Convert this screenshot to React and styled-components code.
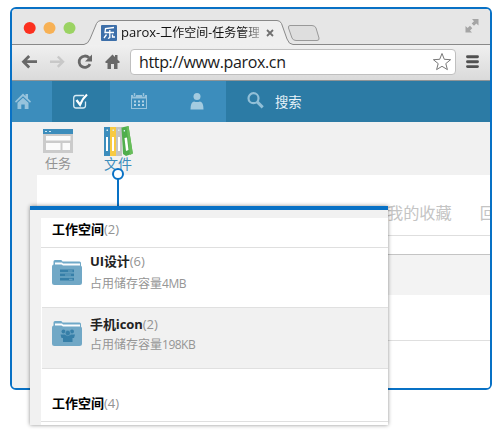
import React from 'react';
import styled, { createGlobalStyle } from 'styled-components';

const Global = createGlobalStyle`
  * { box-sizing: border-box; }
  body { margin: 0; background: #fff; overflow: hidden; }
  #root { font-family: "Open Sans", "Noto Sans CJK SC", sans-serif; }
  svg { display: block; flex: none; }
`;

const Stage = styled.div`
  position: relative;
  width: 502px;
  height: 446px;
  padding: 7px 10px;
  overflow: hidden;
`;

const Browser = styled.div`
  width: 482px;
  height: 383px;
  border: 2px solid #0871c5;
  border-radius: 6px;
  overflow: hidden;
  display: flex;
  flex-direction: column;
  background: #fff;
`;

const TabStrip = styled.div`
  height: 36px;
  flex: none;
  display: grid;
  background: #e6e6e6;
  > * { grid-area: 1 / 1; }
`;

const TabContent = styled.div`
  display: flex;
  align-items: center;
  height: 25px;
  margin: 11px 0 0 89px;
  z-index: 1;
`;

const TabTitle = styled.div`
  width: 138px;
  margin: 0 5px 0 4px;
  font-size: 12px;
  line-height: 20px;
  white-space: nowrap;
  color: #111;
  mask-image: linear-gradient(90deg, #000 88%, rgba(0, 0, 0, 0.35));
`;

const Latin = styled.span`
  font-size: 13px;
`;

const Toolbar = styled.div`
  height: 36px;
  flex: none;
  display: flex;
  align-items: flex-start;
  background: linear-gradient(#f0f0f0, #dadada);
  border-bottom: 1px solid #8f9496;
`;

const Address = styled.div`
  display: flex;
  align-items: center;
  justify-content: space-between;
  width: 326px;
  height: 26px;
  margin: 4px 9px 0 0;
  padding: 0 3px 0 8px;
  background: #fff;
  border: 1px solid #bfbfbf;
  border-radius: 4px;
  font-size: 16px;
  letter-spacing: -0.35px;
  line-height: 24px;
  color: #1a1a1a;
`;

const Nav = styled.div`
  height: 41px;
  flex: none;
  display: flex;
  border-bottom: 1px solid #2874a0;
`;

const NavItem = styled.div`
  width: ${(p) => p.$width}px;
  height: 41px;
  display: flex;
  padding: 10px 0 0 ${(p) => p.$inset}px;
  background: ${(p) => (p.$dark ? '#2c7ba5' : '#3c8dbc')};
`;

const SearchLabel = styled.span`
  margin-left: 10px;
  font-size: 13.3px;
  line-height: 22px;
  color: #e8f3f9;
`;

const SubNav = styled.div`
  height: 53px;
  flex: none;
  display: flex;
  padding: 4px 0 0 16px;
  background: #f1f1f1;
`;

const Shortcut = styled.div`
  width: 60px;
  display: flex;
  flex-direction: column;
  align-items: center;
  font-size: ${(p) => p.$size}px;
  line-height: 16px;
  color: ${(p) => p.$color};
  span { margin-top: ${(p) => p.$gap}px; }
`;

const Body = styled.div`
  flex: 1;
  display: flex;
  background: #f1f1f1;
`;

const Sheet = styled.div`
  width: 453px;
  margin-left: 25px;
  background: #fff;
`;

const Links = styled.div`
  height: 61px;
  display: flex;
  gap: 28px;
  padding: 26px 0 0 350px;
  border-bottom: 1px solid #dedede;
  font-size: 16.2px;
  line-height: 24px;
  color: #c4c4c4;
  white-space: nowrap;
  overflow: hidden;
`;

const Band = styled.div`
  height: ${(p) => p.$height}px;
  background: ${(p) => p.$bg || '#fff'};
  border-bottom: ${(p) => (p.$line ? `1px solid ${p.$line}` : 'none')};
`;

const Connector = styled.svg`
  position: absolute;
  left: 111px;
  top: 167px;
`;

const Popover = styled.div`
  position: absolute;
  left: 30px;
  top: 206px;
  width: 358px;
  height: 219px;
  padding: 8px 0 0 11px;
  border-top: 4px solid #0871c5;
  background: #f1f1f1;
  box-shadow: 0 0 4px rgba(0, 0, 0, 0.45);
`;

const List = styled.div`
  height: 207px;
  background: #fff;
`;

const GroupTitle = styled.div`
  height: ${(p) => p.$height}px;
  padding: ${(p) => p.$top}px 0 0 11px;
  border-bottom: 1px solid #dfdfdf;
  font-size: 13px;
  line-height: 20px;
  color: #000;
`;

const Count = styled.span`
  font-size: 13px;
  color: #939393;
`;

const Item = styled.div`
  height: ${(p) => p.$height}px;
  display: flex;
  gap: 8px;
  margin-left: 1px;
  padding: ${(p) => p.$top}px 0 0 10px;
  border-bottom: 1px solid #e0e0e0;
  background: ${(p) => (p.$active ? '#f1f1f1' : '#fff')};
  > svg { margin-top: ${(p) => p.$drop}px; }
`;

const Name = styled.div`
  font-size: 13px;
  line-height: 20px;
  color: #222;
  b { letter-spacing: -0.1px; }
`;

const Meta = styled.div`
  margin-top: ${(p) => p.$gap}px;
  font-size: 12px;
  line-height: 20px;
  color: #959595;
  span { letter-spacing: -0.5px; }
`;

const TabShape = () => (
  <svg width="478" height="36" viewBox="12 9 478 36">
    <path d="M12 44.5H84Q88 44 90 39L96.500 23.500Q98 20.500 101 20.500H277Q280 20.500 281.500 23.500L287 39Q289 44.500 293 44.500H490V46H12Z" fill="#efefef" />
    <path d="M12 44.500H84Q88 44 90 39L96.500 23.500Q98 20.500 101 20.500H277Q280 20.500 281.500 23.500L287 39Q289 44.500 293 44.500H490" fill="none" stroke="#898989" />
    <path d="M290 25.500H312Q315 25.500 316 28L319 38Q319.500 40.500 317 40.500H296Q293 40.500 292 38L288.500 28Q288 25.500 290 25.500Z" fill="#dedede" stroke="#999" />
    <circle cx="29.700" cy="28" r="6" fill="#fc301f" />
    <circle cx="49.500" cy="28" r="6" fill="#f7b155" />
    <circle cx="69.500" cy="28" r="6" fill="#9bd363" />
    <g fill="#a5a5a5">
      <path d="M472 19H478.500V25.500L476.300 23.500L474 25.800L471.700 23.500L474 21.200Z" />
      <path d="M465.500 26V32.500H472L470 30.500L472.300 28.200L470 25.800L467.600 28Z" />
    </g>
  </svg>
);

const Favicon = () => (
  <svg width="16" height="16" viewBox="0 0 16 16">
    <rect width="16" height="16" rx="1" fill="#3d6fa9" />
    <path d="M13 2.500L4.500 3.500L4 7.500H13M8.800 5V12.500L7 13.500M5.500 9.500L3 13M11.500 9.500V12H14" fill="none" stroke="#fff" strokeWidth="1.300" />
  </svg>
);

const CloseMark = () => (
  <svg width="10" height="10" viewBox="0 0 10 10">
    <path d="M3 2L9 8M9 2L3 8" stroke="#707070" strokeWidth="1.800" />
  </svg>
);

const Controls = () => (
  <svg width="118" height="35" viewBox="12 45 118 35">
    <g fill="none" strokeWidth="2.800">
      <path d="M37 61.700H24M29.200 56L23.500 61.700L29.200 67.400" stroke="#686868" />
      <path d="M50 61.700H62M57.800 56.500L63 61.700L57.800 66.900" stroke="#c8c8c8" strokeWidth="2.400" />
      <path d="M89 57.800A5.700 5.700 0 1 0 90 64.200" stroke="#686868" />
    </g>
    <path d="M92 54.500V61.500H85Z" fill="#686868" />
    <path d="M105 62L112.500 54.500L115 57V55H117.500V59.500L120 62L119 63H117.500V69H114V64H111V69H107.500V63H106Z" fill="#686868" />
  </svg>
);

const Star = () => (
  <svg width="20" height="20" viewBox="0 0 20 20">
    <path d="M10 1.500L12.300 7.300L18.600 7.700L13.800 11.600L15.400 17.600L10 14.300L4.600 17.600L6.200 11.600L1.400 7.700L7.700 7.300Z" fill="#fff" stroke="#777" strokeLinejoin="round" />
  </svg>
);

const Menu = () => (
  <svg width="15" height="35" viewBox="0 0 15 35">
    <path d="M2.500 11.800H12.500M2.500 16.700H12.500M2.500 21.600H12.500" stroke="#505050" strokeWidth="2.900" strokeLinecap="round" />
  </svg>
);

const HomeIcon = () => (
  <svg width="18" height="20" viewBox="0 0 18 20">
    <g fill="#97c3dc">
      <path d="M1 10.500L9 2.500L11.500 5V3H14V7.500L17 10.500L16 11.700L9 5.200L2 11.700Z" />
      <path d="M3.500 11.700L9 6.700L14.500 11.700V18H10.700V13.500H7.300V18H3.500Z" />
    </g>
  </svg>
);

const CheckIcon = () => (
  <svg width="17" height="20" viewBox="0 0 17 20">
    <path d="M12 4.500H4Q1.700 4.500 1.700 7V14.500Q1.700 17 4 17H11Q13.500 17 13.500 14.500V10.500" fill="none" stroke="#d9ebf4" strokeWidth="1.300" />
    <path d="M4.500 9L8 13.700Q10.500 7.500 15 3.500" fill="none" stroke="#fff" strokeWidth="2.300" />
  </svg>
);

const CalendarIcon = () => (
  <svg width="18" height="20" viewBox="0 0 18 20">
    <path d="M1 4H17V18H1ZM2 7.500V17H16V7.500Z" fill="#97c3dc" fillRule="evenodd" />
    <path d="M4.500 2V5.500M13.500 2V5.500" stroke="#3c8dbc" strokeWidth="3" />
    <path d="M4.500 2V5M13.500 2V5" stroke="#97c3dc" strokeWidth="1.500" />
    <path d="M4 10.500H14M4 14H14" stroke="#b2d3e6" strokeWidth="1.800" strokeDasharray="2 2" />
  </svg>
);

const UserIcon = () => (
  <svg width="16" height="20" viewBox="0 0 16 20">
    <circle cx="8" cy="5.500" r="3.500" fill="#a3cbe0" />
    <path d="M1.500 18.500Q1.500 11 5 10.500Q8 11.500 11 10.500Q14.500 11 14.500 18.500Z" fill="#a3cbe0" />
  </svg>
);

const SearchIcon = () => (
  <svg width="18" height="20" viewBox="0 0 18 20">
    <circle cx="6.500" cy="7.200" r="5" fill="none" stroke="#91bfd7" strokeWidth="2.200" />
    <path d="M10.200 10.900L15.700 16.400" stroke="#91bfd7" strokeWidth="3" />
  </svg>
);

const TaskIcon = () => (
  <svg width="30" height="27" viewBox="0 0 30 27">
    <path d="M0 6H30V27H0Z" fill="#cbcbcb" />
    <path d="M0 3H30V8H0Z" fill="#3c8dbc" />
    <path d="M2 5H4V6H2ZM6 5H8V6H6Z" fill="#cee9f6" />
    <path d="M3 10H27.500V14.500H3ZM3 17H17.500V24H3ZM19.500 17H27V24H19.500Z" fill="#fbfbfb" />
  </svg>
);

const FilesIcon = () => (
  <svg width="30" height="32" viewBox="0 0 30 32">
    <path d="M1 1H7V30H1Z" fill="#3c8dbc" />
    <path d="M7 1H13V30H7Z" fill="#f8ca42" />
    <path d="M13 1H19V30H13Z" fill="#c4c4c4" />
    <path d="M18.500 1.500L25.500 0L29.800 27.500L23 30L20 28Z" fill="#50ae4c" />
    <path d="M23.500 1L25.500 0L29.800 27.500L27 29Z" fill="#67bd59" />
    <path d="M3 11H5V25H3ZM9 11H11V25H9ZM15 11H17V25H15ZM21.500 12L24 11.500L25.500 24L23 25Z" fill="#fff" />
    <path d="M3.500 3.500H5V5H3.500ZM9.500 3.500H11V5H9.500ZM15 3.500H16.500V5H15ZM20.700 4H22V5.500H20.700Z" fill="#d7eef9" />
  </svg>
);

const Folder = ({ people }) => (
  <svg width="30" height="27" viewBox="0 0 30 27">
    <path d="M1.500 8V2.500Q1.500 1 3 1H9Q10 1 10.500 2.500H27.500Q29 2.500 29 4V8Z" fill="#70a9c8" />
    <path d="M3 3.500H10L11 4.500H28V8H3Z" fill="#fbfdfe" />
    <path d="M0 7.500Q0 5.500 2 5.500H9.500L11 6.500H28Q30 6.500 30 8.500V23.500Q30 26 27.500 26H2.500Q0 26 0 23.500Z" fill="#71a8c6" />
    {people ? (
      <g fill="#367fa8">
        <circle cx="11.500" cy="11.500" r="2" />
        <circle cx="20" cy="11.500" r="2" />
        <path d="M8.500 14.500H13V18H9.500ZM18.500 14.500H23L22 18H18.500Z" />
        <path d="M11 17.500Q11 15 13.500 15H18Q20.500 15 20.500 17.500V22H11Z" />
        <circle cx="15.800" cy="13" r="2.700" stroke="#71a8c6" strokeWidth=".6" />
      </g>
    ) : (
      <g>
        <path d="M8 10.500H22V13.300H8ZM8 14.500H22V17.300H8ZM8 18.800H22V21.600H8Z" fill="#367fa8" />
        <path d="M16 12H20.500M13 16H19M17 20.300H20.500" stroke="#71a8c6" />
      </g>
    )}
  </svg>
);

export default function App() {
  return (
    <>
      <Global />
      <Stage>
        <Browser>
          <TabStrip>
            <TabShape />
            <TabContent>
              <Favicon />
              <TabTitle><Latin>parox-</Latin>工作空间-任务管理</TabTitle>
              <CloseMark />
            </TabContent>
          </TabStrip>
          <Toolbar>
            <Controls />
            <Address><span>http://www.parox.cn</span><Star /></Address>
            <Menu />
          </Toolbar>
          <Nav>
            <NavItem $width={40} $inset={2}><HomeIcon /></NavItem>
            <NavItem $width={58} $inset={20} $dark><CheckIcon /></NavItem>
            <NavItem $width={58} $inset={20}><CalendarIcon /></NavItem>
            <NavItem $width={58} $inset={21}><UserIcon /></NavItem>
            <NavItem $width={264} $inset={21} $dark><SearchIcon /><SearchLabel>搜索</SearchLabel></NavItem>
          </Nav>
          <SubNav>
            <Shortcut $size={13} $color="#939393" $gap={2}><TaskIcon /><span>任务</span></Shortcut>
            <Shortcut $size={14} $color="#3c8dbc" $gap={-2}><FilesIcon /><span>文件</span></Shortcut>
          </SubNav>
          <Body>
            <Sheet>
              <Links><span>我的收藏</span><span>回</span></Links>
              <Band $height={19} $line="#c4c4c4" />
              <Band $height={40} $bg="#f3f3f3" />
              <Band $height={46} $line="#dfdfdf" />
            </Sheet>
          </Body>
        </Browser>
        <Connector width="14" height="40" viewBox="0 0 14 40">
          <path d="M7 12V40" stroke="#0871c5" strokeWidth="2" />
          <circle cx="7" cy="7" r="5" fill="#fff" stroke="#0871c5" strokeWidth="2" />
        </Connector>
        <Popover>
          <List>
            <GroupTitle $height={30} $top={1}><b>工作空间</b><Count>(2)</Count></GroupTitle>
            <Item $height={60} $top={3} $drop={8}>
              <Folder />
              <div>
                <Name><b>UI设计</b><Count>(6)</Count></Name>
                <Meta $gap={3}>占用储存容量<span>4MB</span></Meta>
              </div>
            </Item>
            <Item $height={61} $top={6} $drop={6} $active>
              <Folder people />
              <div>
                <Name><b>手机icon</b><Count>(2)</Count></Name>
                <Meta $gap={1}>占用储存容量<span>198KB</span></Meta>
              </div>
            </Item>
            <GroupTitle $height={53} $top={24}><b>工作空间</b><Count>(4)</Count></GroupTitle>
          </List>
        </Popover>
      </Stage>
    </>
  );
}
